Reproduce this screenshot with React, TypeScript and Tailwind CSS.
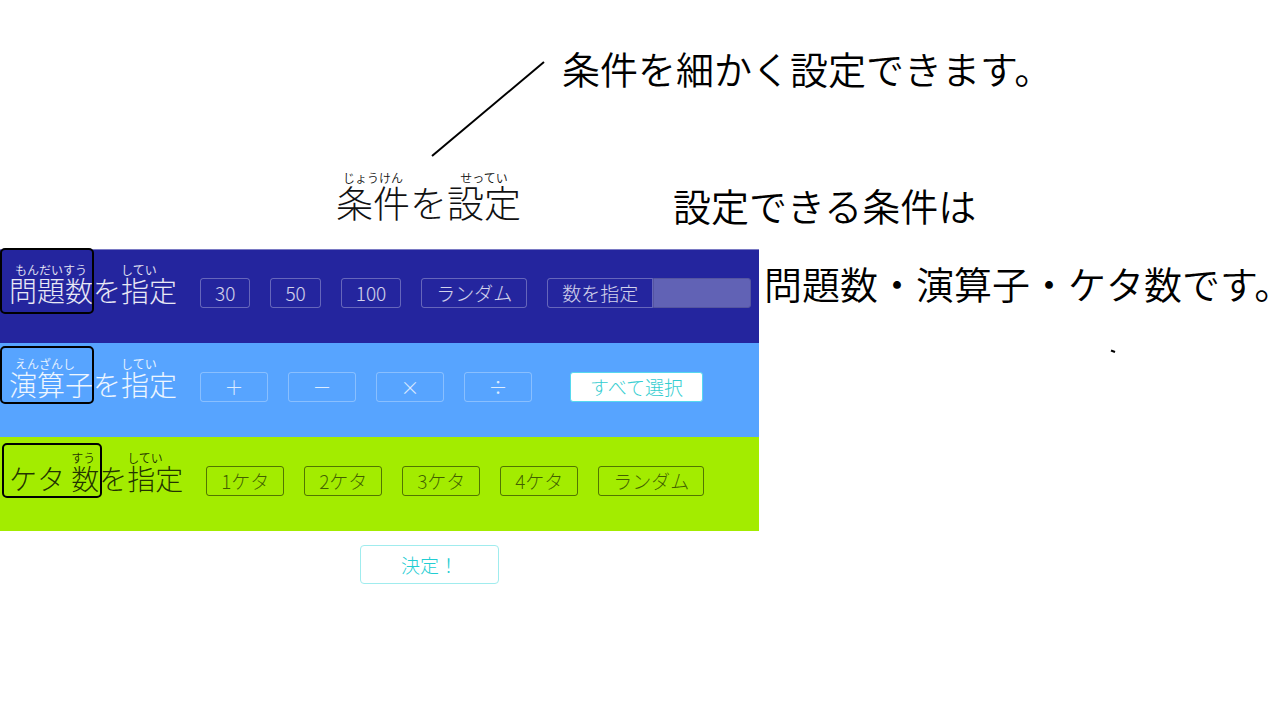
import type { ReactNode } from 'react';

const FONT = "font-['Noto_Sans_CJK_JP',sans-serif]";

function Ruby({ text, reading, className = '[ruby-align:start]', rtClassName = '' }: { text: string; reading: string; className?: string; rtClassName?: string }) {
  return (
    <ruby className={className}>
      {text}
      <rt className={`text-[12px] font-[350] leading-[16px] ${rtClassName}`}>{reading}</rt>
    </ruby>
  );
}

function Note({ children, className = '' }: { children: ReactNode; className?: string }) {
  return (
    <p className={`whitespace-nowrap text-[38px] font-[350] leading-[56px] ${className}`}>{children}</p>
  );
}

function Option({ children, className }: { children: ReactNode; className: string }) {
  return (
    <button type="button" className={`h-[30px] shrink-0 whitespace-nowrap rounded-[3px] border text-center leading-[28px] ${className}`}>
      {children}
    </button>
  );
}

function Band({ className, mark, title, children }: { className: string; mark: string; title: ReactNode; children: ReactNode }) {
  return (
    <section className={`relative flex h-[94px] items-start gap-[23px] pl-[9px] text-[19px] ${className}`}>
      <h2 className="mt-[15px] shrink-0 whitespace-nowrap text-[28px] leading-[40px]">{title}</h2>
      <div className="mt-[29px] flex gap-5">{children}</div>
      <span aria-hidden="true" className={`absolute rounded-[5px] border-2 border-black ${mark}`} />
    </section>
  );
}

export default function App() {
  return (
    <div className={`min-h-screen overflow-hidden bg-white font-light text-black ${FONT}`}>
      <div className="flex h-[160px] items-start gap-[17px] pl-[431px] pt-[40px]">
        <svg className="mt-[21px] shrink-0" width="114" height="97" viewBox="0 0 114 97" aria-hidden="true">
          <path d="M1 95 L113 1" stroke="#000" strokeWidth="2" fill="none" />
        </svg>
        <Note>条件を細かく設定できます。</Note>
      </div>

      <div className="flex h-[89px] items-start gap-[152px] pl-[336px]">
        <h1 className="mt-3 shrink-0 whitespace-nowrap text-[37px] leading-[54px] text-[#111]">
          <Ruby className="[ruby-align:center]" text="条件" reading="じょうけん" />を
          <Ruby className="[ruby-align:center]" text="設定" reading="せってい" />
        </h1>
        <Note className="mt-[17px]">設定できる条件は</Note>
      </div>

      <div className="flex items-start gap-[5px]">
        <main className="w-[759px] shrink-0">
          <Band
            className="bg-[#24259e] text-white/90 shadow-[inset_0_1px_0_#7a7ac4]"
            mark="left-0 -top-px h-[66px] w-[94px]"
            title={<><Ruby rtClassName="pl-[6px]" text="問題数" reading="もんだいすう" />を<Ruby text="指定" reading="してい" /></>}
          >
            <Option className="border-white/30 px-[14px] text-white/80">30</Option>
            <Option className="border-white/30 px-[14px] text-white/80">50</Option>
            <Option className="border-white/30 px-[14px] text-white/80">100</Option>
            <Option className="border-white/30 px-[14px] text-white/80">ランダム</Option>
            <div className="flex">
              <Option className="rounded-r-none border-white/30 px-[14px] text-white/80">数を指定</Option>
              <input
                type="text"
                aria-label="問題数"
                className="h-[30px] w-[98px] rounded-r-[3px] border border-[#5555a0] bg-[#6162b5] px-2 outline-none"
              />
            </div>
          </Band>

          <Band
            className="bg-[#57a4ff] text-white/90"
            mark="left-0 top-[3px] h-[58px] w-[94px]"
            title={<><Ruby rtClassName="pl-[6px]" text="演算子" reading="えんざんし" />を<Ruby text="指定" reading="してい" /></>}
          >
            <Option className="w-[68px] border-white/30 text-white/80">＋</Option>
            <Option className="w-[68px] border-white/30 text-white/80">－</Option>
            <Option className="w-[68px] border-white/30 text-white/80">×</Option>
            <Option className="w-[68px] border-white/30 text-white/80">÷</Option>
            <Option className="ml-[18px] w-[133px] border-[#57d8ee] bg-white text-[#34cdd0]">すべて選択</Option>
          </Band>

          <Band
            className="bg-[#a3ec00] text-black/80"
            mark="left-[2px] top-[6px] h-[55px] w-[100px]"
            title={<>ケタ <Ruby text="数" reading="すう" />を<Ruby text="指定" reading="してい" /></>}
          >
            <Option className="w-[78px] border-black/50 text-black/60">1ケタ</Option>
            <Option className="w-[78px] border-black/50 text-black/60">2ケタ</Option>
            <Option className="w-[78px] border-black/50 text-black/60">3ケタ</Option>
            <Option className="w-[78px] border-black/50 text-black/60">4ケタ</Option>
            <Option className="w-[106px] border-black/50 text-black/60">ランダム</Option>
          </Band>

          <div className="pl-[360px] pt-[14px]">
            <button type="button" className="h-[39px] w-[139px] rounded-[4px] border border-[#a0ecee] text-[19px] leading-[37px] text-[#22cdd2]">
              決定！
            </button>
          </div>
        </main>

        <div className="pt-[6px]">
          <Note>問題数・演算子・ケタ数です。</Note>
          <svg className="ml-[346px] mt-[38px]" width="6" height="5" viewBox="0 0 6 5" aria-hidden="true">
            <path d="M1 1.5 L5 3" stroke="#000" strokeWidth="2" />
          </svg>
        </div>
      </div>
    </div>
  );
}
